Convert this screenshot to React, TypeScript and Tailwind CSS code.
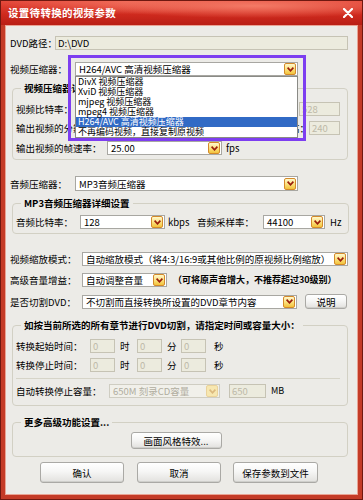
import React from "react";

const font = "font-['Noto_Sans_CJK_SC','Noto_Sans',sans-serif]";

function Arrow({ off = false }: { off?: boolean }) {
  return (
    <span
      className={`flex h-[12px] w-[12px] shrink-0 items-center justify-center rounded-[2px] border ${
        off
          ? "border-[#ead29a] bg-[#f7e7b0]"
          : "border-[#d48a2a] bg-[linear-gradient(180deg,#fff8cc_0%,#fbe07a_55%,#f2c23c_100%)]"
      }`}
    >
      <svg width="7" height="5" viewBox="0 0 7 5">
        <path
          d="M0.6 0.7 L3.5 3.8 L6.4 0.7"
          fill="none"
          stroke={off ? "#dcb97e" : "#9a1d0c"}
          strokeWidth="1.7"
        />
      </svg>
    </span>
  );
}

function Select({
  w,
  text,
  off = false,
  tall = false,
}: {
  w: string;
  text: string;
  off?: boolean;
  tall?: boolean;
}) {
  return (
    <div
      className={`flex shrink-0 items-center justify-between border pl-[3px] pr-px ${w} ${
        tall ? "h-[15px]" : "h-[14px]"
      } ${off ? "border-[#cfcdc2] bg-[#f1f0ea] text-[#b0ad9f]" : "border-[#a8a7a2] bg-white"}`}
    >
      <span>{text}</span>
      <Arrow off={off} />
    </div>
  );
}

function Box({ w, text, dark = false }: { w: string; text: string; dark?: boolean }) {
  return (
    <div
      className={`flex h-[14px] shrink-0 items-center border border-[#c6c3b4] bg-[#ecebde] pl-[2px] ${w} ${
        dark ? "text-black" : "text-[#bdb9a8]"
      }`}
    >
      {text}
    </div>
  );
}

function Btn({ w, h, text }: { w: string; h: string; text: string }) {
  return (
    <div
      className={`flex shrink-0 items-center justify-center rounded-[3px] border border-[#aaa9a5] bg-[linear-gradient(180deg,#ffffff_0%,#f6f6f5_45%,#e2e1de_100%)] shadow-[inset_0_-1px_0_#cfcfcb] ${w} ${h}`}
    >
      {text}
    </div>
  );
}

const group = "mx-[2px] mr-[5px] rounded-[4px] border border-[#d2d0c4] pl-[3px] pr-[7px]";
const legend = "ml-[5px] px-[3px] font-bold leading-[12px]";

export default function App() {
  const items = [
    "DivX 视频压缩器",
    "XviD 视频压缩器",
    "mjpeg 视频压缩器",
    "mpeg4 视频压缩器",
    "H264/AVC 高清视频压缩器",
    "不再编码视频，直接复制原视频",
  ];

  return (
    <div
      className={`flex h-[500px] w-[363px] flex-col whitespace-nowrap border border-[#6f1810] bg-[#c43b27] text-[9.5px] leading-[12px] text-black ${font}`}
    >
      {/* title bar */}
      <div className="flex h-[24px] shrink-0 items-center justify-between bg-[radial-gradient(ellipse_at_70%_20%,#f47a66_0%,transparent_45%),radial-gradient(ellipse_at_35%_0%,#ef6a58_0%,transparent_40%),linear-gradient(180deg,#e4483a_0%,#cf2a1e_55%,#b91e15_100%)] pl-[7px] pr-[9px]">
        <span className="text-[10.5px] font-bold tracking-[0.3px] text-white">设置待转换的视频参数</span>
        <svg width="10" height="10" viewBox="0 0 10 10">
          <path d="M1 1 L9 9 M9 1 L1 9" stroke="#ffffff" strokeWidth="2.2" strokeLinecap="round" />
        </svg>
      </div>

      {/* body */}
      <div className="mx-[4px] mb-[4px] flex flex-1 flex-col border border-[#e9a394] bg-[#ecebe7] px-[4px]">
        <div className="mt-[10px] flex h-[14px] items-center">
          <span className="w-[45px] shrink-0">DVD路径：</span>
          <Box w="w-[293px]" text="D:\DVD" dark />
        </div>

        <div className="mt-[12px] flex h-[14px] items-center">
          <span className="w-[65px] shrink-0">视频压缩器：</span>
          <div className="relative">
            <Select w="w-[223px]" text="H264/AVC 高清视频压缩器" />
            <div className="absolute left-0 top-[14px] z-10 w-[223px] border border-[#8a8a86] bg-white">
              {items.map((t, i) => (
                <div
                  key={i}
                  className={`flex h-[10px] items-center pl-[2px] text-[9px] leading-[10px] ${
                    i === 4 ? "bg-[#316ac5] text-white" : ""
                  }`}
                >
                  {t}
                </div>
              ))}
            </div>
            <div className="absolute left-[-7px] top-[-7px] z-20 h-[86px] w-[238px] border-[3px] border-[#7d3ef0]" />
          </div>
        </div>

        <fieldset className={`mt-[6px] pb-[4px] ${group}`}>
          <legend className={legend}>视频压缩器详细设置</legend>
          <div className="mt-[8px] flex h-[14px] items-center">
            <span>视频比特率：</span>
            <span className="ml-auto" />
            <Box w="w-[41px]" text="528" />
          </div>
          <div className="mt-[5px] flex h-[14px] items-center">
            <span>输出视频的分辨率：</span>
            <span className="ml-auto">宽：</span>
            <Box w="w-[31px]" text="320" />
            <span className="ml-[2px]">高：</span>
            <Box w="w-[31px]" text="240" />
          </div>
          <div className="mt-[6px] flex h-[14px] items-center">
            <span className="w-[91px] shrink-0">输出视频的帧速率：</span>
            <Select w="w-[115px]" text="25.00" />
            <span className="ml-[4px]">fps</span>
          </div>
        </fieldset>

        <div className="mt-[16px] flex h-[15px] items-center">
          <span className="w-[65px] shrink-0">音频压缩器：</span>
          <Select w="w-[223px]" text="MP3音频压缩器" tall />
        </div>

        <fieldset className={`mt-[6px] pb-[4px] ${group}`}>
          <legend className={legend}>MP3音频压缩器详细设置</legend>
          <div className="mt-[6px] flex h-[14px] items-center">
            <span className="w-[64px] shrink-0">音频比特率：</span>
            <Select w="w-[85px]" text="128" />
            <span className="w-[32px] shrink-0 pl-[3px]">kbps</span>
            <span className="w-[66px] shrink-0">音频采样率：</span>
            <Select w="w-[62px]" text="44100" />
            <span className="ml-[5px]">Hz</span>
          </div>
        </fieldset>

        <div className="mt-[18px] flex h-[14px] items-center">
          <span className="w-[72px] shrink-0">视频缩放模式：</span>
          <Select w="w-[266px]" text="自动缩放模式（将4:3/16:9或其他比例的原视频比例缩放）" />
        </div>

        <div className="mt-[7px] flex h-[14px] items-center">
          <span className="w-[72px] shrink-0">高级音量增益：</span>
          <Select w="w-[85px]" text="自动调整音量" />
          <span className="ml-[6px] text-[9px] font-bold">（可将原声音增大，不推荐超过30级别）</span>
        </div>

        <div className="mt-[7px] flex h-[15px] items-center">
          <span className="w-[72px] shrink-0">是否切割DVD：</span>
          <Select w="w-[215px]" text="不切割而直接转换所设置的DVD章节内容" />
          <span className="w-[8px] shrink-0" />
          <Btn w="w-[42px]" h="h-[15px]" text="说明" />
        </div>

        <fieldset className={`mt-[10px] pb-[7px] ${group}`}>
          <legend className={legend}>如按当前所选的所有章节进行DVD切割，请指定时间或容量大小：</legend>
          {["转换起始时间：", "转换停止时间："].map((l, i) => (
            <div key={l} className={`${i === 0 ? "mt-[8px]" : "mt-[5px]"} flex h-[14px] items-center`}>
              <span className="w-[74px] shrink-0">{l}</span>
              <Box w="w-[25px]" text="0" />
              <span className="w-[22px] shrink-0 pl-[5px]">时</span>
              <Box w="w-[25px]" text="0" />
              <span className="w-[19px] shrink-0 pl-[5px]">分</span>
              <Box w="w-[25px]" text="0" />
              <span className="pl-[8px]">秒</span>
            </div>
          ))}
          <div className="mt-[6px] h-px bg-[#d6d4c8]" />
          <div className="mt-[5px] flex h-[14px] items-center">
            <span className="w-[93px] shrink-0">自动转换停止容量：</span>
            <Select w="w-[111px]" text="650M 刻录CD容量" off />
            <span className="w-[9px] shrink-0" />
            <Box w="w-[37px]" text="650" />
            <span className="ml-[5px] text-[9px]">MB</span>
          </div>
        </fieldset>

        <fieldset className={`mt-[10px] pb-[7px] ${group}`}>
          <legend className={legend}>更多高级功能设置...</legend>
          <div className="mt-[4px] flex justify-center pr-[4px]">
            <Btn w="w-[91px]" h="h-[17px]" text="画面风格特效..." />
          </div>
        </fieldset>

        <div className="mt-[5px] flex items-center pl-[30px]">
          <Btn w="w-[84px]" h="h-[21px]" text="确认" />
          <span className="w-[13px] shrink-0" />
          <Btn w="w-[84px]" h="h-[21px]" text="取消" />
          <span className="w-[12px] shrink-0" />
          <Btn w="w-[85px]" h="h-[21px]" text="保存参数到文件" />
        </div>
      </div>
    </div>
  );
}
